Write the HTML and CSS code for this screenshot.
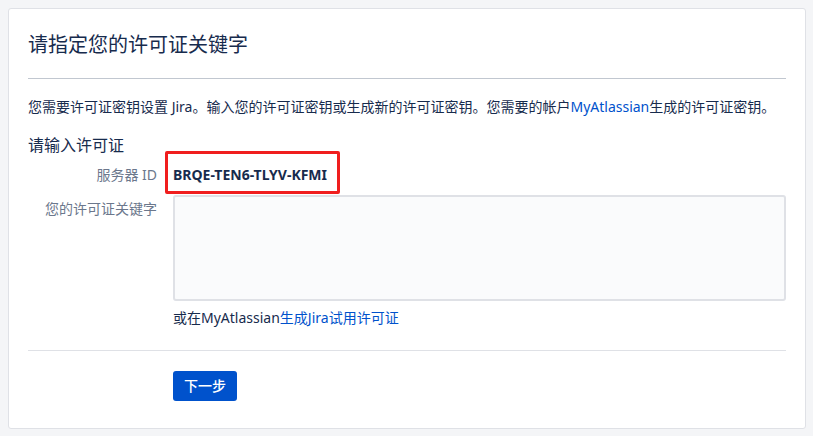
FILE: index.html
```html
<!DOCTYPE html>
<html lang="zh-CN">
<head>
<meta charset="utf-8">
<title>请指定您的许可证关键字</title>
<link rel="stylesheet" href="styles.css">
</head>
<body>
<div class="card">
  <div class="card-header">
    <h1 class="title">请指定您的许可证关键字</h1>
  </div>
  <p class="desc">您需要许可证密钥设置 Jira。输入您的许可证密钥或生成新的许可证密钥。您需要的帐户<a class="link" href="#">MyAtlassian</a>生成的许可证密钥。</p>
  <h2 class="subtitle">请输入许可证</h2>
  <div class="form">
    <div class="label">服务器 ID</div>
    <div class="value"><span class="server-id">BRQE-TEN6-TLYV-KFMI</span></div>
    <div class="label label-top">您的许可证关键字</div>
    <div class="field">
      <textarea class="textarea"></textarea>
      <div class="hint">或在MyAtlassian<a class="link" href="#">生成Jira试用许可证</a></div>
    </div>
  </div>
  <div class="footer">
    <button class="btn-primary">下一步</button>
  </div>
</div>
</body>
</html>
```
FILE: styles.css
```css
* { box-sizing: border-box; }
html, body { margin: 0; padding: 0; }
body {
  background: #f4f5f7;
  padding: 8px 7px 7px 8px;
  font-family: "Noto Sans", "Noto Sans CJK SC", sans-serif;
  font-size: 14px;
  color: #172b4d;
}
.card {
  background: #fff;
  border: 1px solid #dfe1e6;
  border-radius: 3px;
  padding: 0 19px 26px 19px;
  height: 421px;
}
.card-header {
  padding-top: 21px;
  padding-bottom: 18px;
  border-bottom: 1px solid #c1c7d0;
}
.title {
  margin: 0;
  font-size: 20px;
  line-height: 30px;
  font-weight: 400;
  color: #172b4d;
}
.desc {
  margin: 18px 0 0 0;
  font-size: 14px;
  line-height: 20px;
}
.link { color: #0052cc; text-decoration: none; }
.subtitle {
  margin: 16px 0 0 0;
  font-size: 16px;
  line-height: 24px;
  font-weight: 400;
}
.form {
  display: grid;
  grid-template-columns: 129px 1fr;
  column-gap: 16px;
  row-gap: 10px;
  margin-top: 8px;
}
.label {
  text-align: right;
  color: #6b778c;
  line-height: 20px;
}
.label-top { padding-top: 4px; }
.value { line-height: 20px; }
.server-id {
  position: relative;
  font-weight: 700;
  color: #172b4d;
}
.server-id::after {
  content: "";
  position: absolute;
  left: -8px;
  right: -13px;
  top: -14px;
  bottom: -10px;
  border: 3px solid #f01e1e;
  border-radius: 2px;
}
.field { display: flex; flex-direction: column; }
.textarea {
  display: block;
  width: 100%;
  height: 106px;
  background: #fafbfc;
  border: 2px solid #dfe1e6;
  border-radius: 3px;
  resize: none;
  font: inherit;
}
.hint {
  margin-top: 7px;
  line-height: 20px;
}
.footer {
  margin-top: 22px;
  border-top: 1px solid #dfe1e6;
  padding-top: 20px;
  padding-left: 145px;
}
.btn-primary {
  height: 30px;
  padding: 0 11px;
  background: #0052cc;
  color: #fff;
  border: none;
  border-radius: 3px;
  font-family: inherit;
  font-size: 14px;
  font-weight: 500;
  line-height: 30px;
}
```
